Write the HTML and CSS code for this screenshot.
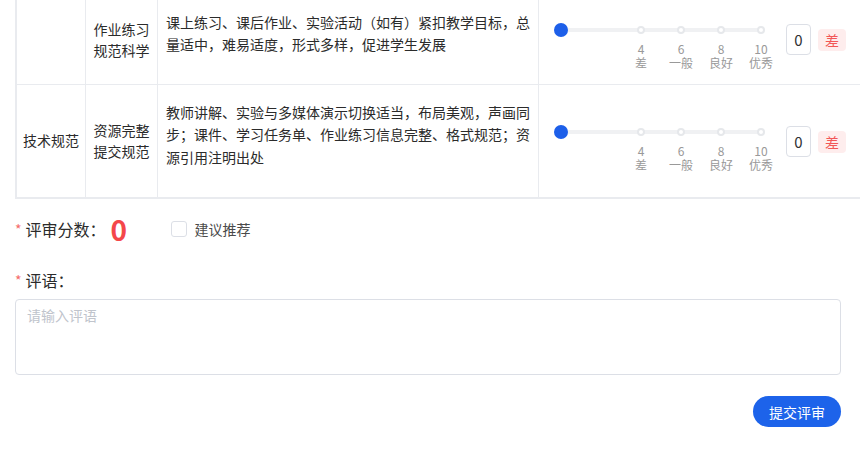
FILE: index.html
```html
<!DOCTYPE html>
<html lang="zh">
<head>
<meta charset="utf-8">
<link rel="stylesheet" href="styles.css">
</head>
<body>
<div class="page">
  <div class="table">
    <div class="row first">
      <div class="cell c1"></div>
      <div class="cell c2">作业练习规范科学</div>
      <div class="cell c3">课上练习、课后作业、实验活动（如有）紧扣教学目标，总量适中，难易适度，形式多样，促进学生发展</div>
      <div class="cell c4">
        <div class="slider">
          <div class="runway">
            <span class="stop" style="left:40%"></span>
            <span class="stop" style="left:60%"></span>
            <span class="stop" style="left:80%"></span>
            <span class="stop" style="left:100%"></span>
            <span class="handle" style="left:0%"></span>
          </div>
          <div class="marks">
            <span class="mark" style="left:40%"><span>4</span><span>差</span></span>
            <span class="mark" style="left:60%"><span>6</span><span>一般</span></span>
            <span class="mark" style="left:80%"><span>8</span><span>良好</span></span>
            <span class="mark" style="left:100%"><span>10</span><span>优秀</span></span>
          </div>
        </div>
        <div class="num">0</div>
        <div class="tag">差</div>
      </div>
    </div>
    <div class="row second">
      <div class="cell c1">技术规范</div>
      <div class="cell c2">资源完整提交规范</div>
      <div class="cell c3">教师讲解、实验与多媒体演示切换适当，布局美观，声画同步；课件、学习任务单、作业练习信息完整、格式规范；资源引用注明出处</div>
      <div class="cell c4">
        <div class="slider">
          <div class="runway">
            <span class="stop" style="left:40%"></span>
            <span class="stop" style="left:60%"></span>
            <span class="stop" style="left:80%"></span>
            <span class="stop" style="left:100%"></span>
            <span class="handle" style="left:0%"></span>
          </div>
          <div class="marks">
            <span class="mark" style="left:40%"><span>4</span><span>差</span></span>
            <span class="mark" style="left:60%"><span>6</span><span>一般</span></span>
            <span class="mark" style="left:80%"><span>8</span><span>良好</span></span>
            <span class="mark" style="left:100%"><span>10</span><span>优秀</span></span>
          </div>
        </div>
        <div class="num">0</div>
        <div class="tag">差</div>
      </div>
    </div>
  </div>

  <div class="form">
    <div class="score-row">
      <span class="req">*</span>
      <span class="label">评审分数：</span>
      <span class="score">0</span>
      <label class="check"><span class="box"></span><span>建议推荐</span></label>
    </div>
    <div class="comment-label">
      <span class="req">*</span>
      <span class="label">评语：</span>
    </div>
    <div class="textarea"><span class="placeholder">请输入评语</span></div>
    <div class="actions">
      <button class="btn">提交评审</button>
    </div>
  </div>
</div>
</body>
</html>
```

FILE: styles.css
```css
html, body {
  margin: 0;
  padding: 0;
  background: #fff;
  overflow: hidden;
}
body {
  width: 860px;
  height: 450px;
  font-family: "Noto Sans CJK SC", "Noto Sans", sans-serif;
  color: #303133;
  font-size: 14px;
}
.page {
  width: 860px;
}
.table {
  margin-top: -4px;
  margin-left: 15px;
  width: 860px;
  border-left: 2px solid #e9ebef;
  border-bottom: 1px solid #e9ebef;
}
.row {
  display: grid;
  grid-template-columns: 69px 72px 381px 1fr;
}
.cell {
  box-sizing: border-box;
  border-right: 1px solid #e9ebef;
  border-bottom: 1px solid #e9ebef;
}
.c1, .c2 {
  display: flex;
  align-items: center;
  justify-content: center;
  text-align: center;
  padding: 0 6px;
  line-height: 21px;
  color: #2b2b2b;
}
.c3 {
  padding: 15px 6px 28px 8px;
  line-height: 22.4px;
  color: #2b2b2b;
}
.second .c3 {
  padding-top: 16px;
  padding-bottom: 29px;
}
.c4 {
  display: flex;
  align-items: center;
  padding-left: 15px;
  border-right: none;
}
.second .c4 {
  padding-top: 2px;
}
.slider {
  position: relative;
  width: 200px;
  height: 34px;
  margin: 0 7px;
  flex: none;
}
.runway {
  position: relative;
  height: 14px;
}
.runway::before {
  content: "";
  position: absolute;
  left: 0;
  right: 0;
  top: 5px;
  height: 4px;
  border-radius: 2px;
  background: #f0f1f3;
}
.stop {
  position: absolute;
  top: 3px;
  width: 8px;
  height: 8px;
  box-sizing: border-box;
  border: 2px solid #e6e8eb;
  background: #fff;
  border-radius: 50%;
  transform: translateX(-50%);
}
.handle {
  position: absolute;
  top: 0;
  width: 14px;
  height: 14px;
  border-radius: 50%;
  background: #1d5fe9;
  transform: translateX(-50%);
}
.marks {
  position: relative;
}
.mark {
  position: absolute;
  top: 5px;
  display: flex;
  flex-direction: column;
  align-items: center;
  transform: translateX(-50%);
  font-size: 12px;
  line-height: 14px;
  color: #999;
  white-space: nowrap;
}
.mark span {
  display: block;
  height: 14px;
}
.num {
  box-sizing: border-box;
  width: 25px;
  height: 31px;
  margin-left: 18px;
  border: 1px solid #dcdfe6;
  border-radius: 4px;
  display: flex;
  align-items: center;
  justify-content: center;
  font-size: 15px;
  color: #303133;
  flex: none;
}
.tag {
  box-sizing: border-box;
  width: 28px;
  height: 22px;
  margin-left: 7px;
  border-radius: 4px;
  background: #feeded;
  color: #f25757;
  font-size: 14px;
  display: flex;
  align-items: center;
  justify-content: center;
  flex: none;
}
.form {
  padding: 0 19px 0 15px;
}
.score-row {
  margin-top: 15px;
  height: 30px;
  display: flex;
  align-items: center;
}
.req {
  color: #f56c6c;
  font-size: 14px;
  margin-right: 4px;
  line-height: 14px;
  align-self: center;
}
.label {
  font-size: 16px;
  color: #2b2b2b;
}
.score {
  font-size: 28px;
  font-weight: bold;
  line-height: 30px;
  color: #f4474a;
  margin-left: 5px;
  width: 17px;
}
.check {
  display: flex;
  align-items: center;
  margin-left: 43px;
  font-size: 14px;
  color: #4a4a4a;
}
.box {
  box-sizing: border-box;
  width: 16px;
  height: 16px;
  border: 1px solid #dcdfe6;
  border-radius: 3px;
  margin-right: 8px;
  background: #fff;
}
.comment-label {
  margin-top: 26px;
  height: 20px;
  display: flex;
  align-items: center;
}
.textarea {
  box-sizing: border-box;
  margin-top: 9px;
  height: 76px;
  border: 1px solid #dcdfe6;
  border-radius: 4px;
  padding: 5px 11px;
  line-height: 20px;
}
.placeholder {
  color: #c0c4cc;
  font-size: 14px;
}
.actions {
  display: flex;
  justify-content: flex-end;
  margin-top: 21px;
}
.btn {
  width: 88px;
  height: 31px;
  border: none;
  border-radius: 16px;
  background: #1d63ea;
  color: #fff;
  font-family: "Noto Sans CJK SC", sans-serif;
  font-size: 14px;
  padding: 0;
}
```
